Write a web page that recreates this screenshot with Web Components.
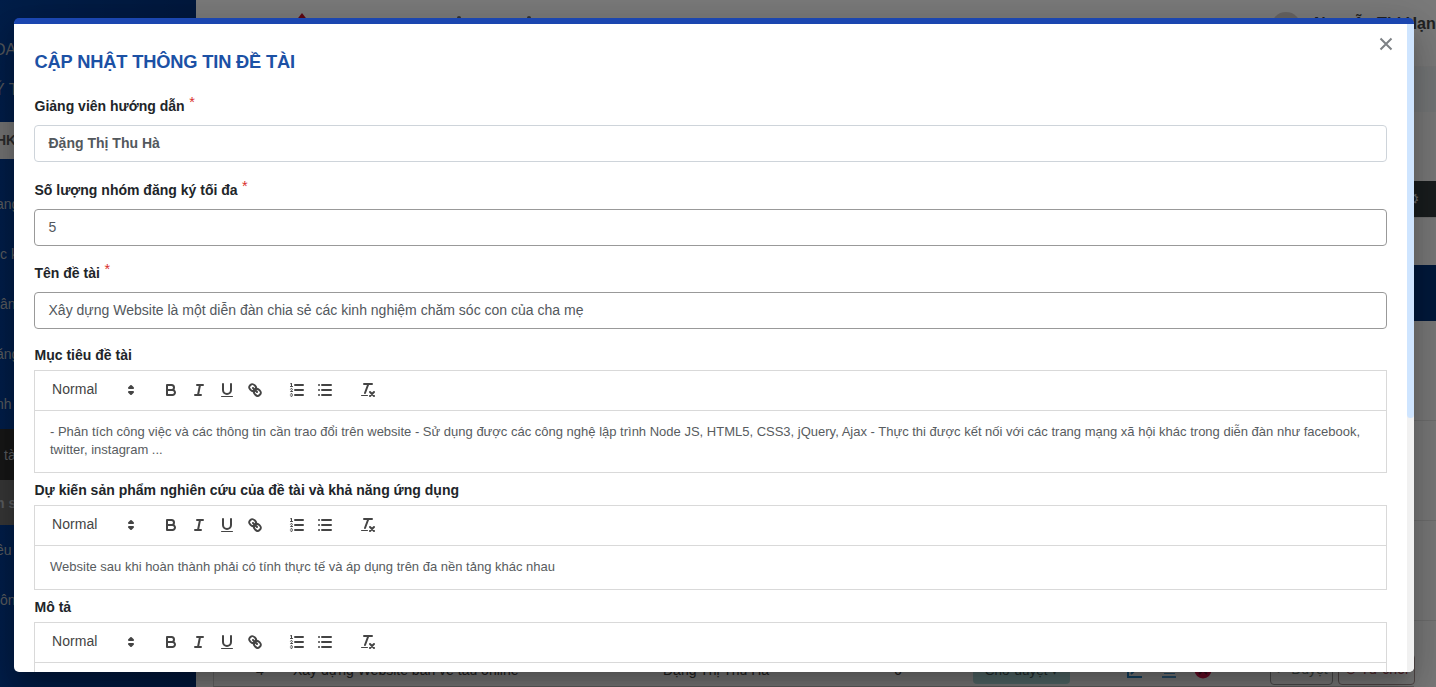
<!DOCTYPE html>
<html lang="vi">
<head>
<meta charset="utf-8">
<title>Cập nhật thông tin đề tài</title>
<style>
html,body{margin:0;height:100%;overflow:hidden;font-family:"Liberation Sans",Arial,sans-serif}
</style>
</head>
<body>
<topic-app></topic-app>
<script>
function define(name, html, setup) {
  const tpl = document.createElement('template');
  tpl.innerHTML = html;
  customElements.define(name, class extends HTMLElement {
    constructor() {
      super();
      this.attachShadow({mode: 'open'}).append(tpl.content.cloneNode(true));
    }
    connectedCallback() { if (setup) setup(this, this.shadowRoot); }
  });
}

define('side-item', `<style>
:host{display:flex;align-items:center;height:50px;font-size:14px;color:#b4b8be;white-space:nowrap;overflow:hidden;box-sizing:border-box}
:host([dark]){background:#2e2e2e;height:51px;padding-left:4px}
:host([grey]){background:#6e6e6e;height:45px;font-weight:700}
:host([cut]) slot{display:block;margin-left:-4px}
</style><slot></slot>`);

define('side-bar', `<style>
:host{display:block;width:196px;height:100%;background:linear-gradient(90deg,#003c92,#00307a);overflow:hidden;color:#a9adb5;flex:none}
.h{height:40px;line-height:40px;font-size:16px;margin-left:-6px;white-space:nowrap}
.h.first{margin-top:30px}
.pick{margin:12px 10px 20px 0;height:37px;background:#e6e6e6;border-radius:0 4px 4px 0;color:#555;font:700 14px/37px "Liberation Sans",sans-serif;text-indent:-4px}
</style>
<div class="h first">DA</div><div class="h">Ý T</div>
<div class="pick">HK</div>
<side-item cut>ang</side-item><side-item>c k</side-item><side-item>ân</side-item><side-item cut>ăng</side-item><side-item cut>nh</side-item>
<side-item dark>tà</side-item><side-item grey cut>n s</side-item><side-item cut>êu</side-item><side-item>ôn</side-item>`);

define('page-header', `<style>
:host{display:flex;height:67px;box-sizing:border-box;justify-content:space-between;background:#f4f4f4;color:#444;font-weight:700;border-bottom:1px solid #ececec}
.logo{margin:13px 0 0 98px;display:flex;gap:147px}
.user{display:flex;gap:13px;padding-top:12px;font-size:16px}
.avatar{width:30px;height:30px;border-radius:50%;background:#cfc8c6}
.name{white-space:nowrap;line-height:24px;width:122px}
.marks{display:flex;gap:66px;padding-top:3px}
.marks i{width:4px;height:3px;border-radius:50%;background:#666}
</style>
<div class="logo"><svg width="16" height="14" viewBox="0 0 16 14"><path d="M8 0l7 9H1z" fill="#c01028"/></svg><div class="marks"><i></i><i></i></div></div>
<div class="user"><div class="avatar"></div><div class="name">Nguyễn Thị Hạn</div></div>`);

define('topic-row', `<style>
:host{display:grid;grid-template-columns:79px 370px 231px 79px 148px 149px 1fr;align-items:center;height:34px;font-size:14px;color:#444;white-space:nowrap;border-left:1px solid #ccc;border-bottom:1px solid #bbb;box-sizing:border-box;margin:0 22px 0 17px}
.n{padding-left:42px}
.tag{background:#a9d5d4;color:#47605f;border-radius:4px;width:97px;height:26px;line-height:26px;text-align:center;font-size:13.500px;margin-top:3px}
.ic{display:flex;gap:17px;align-items:center;padding-left:5px}
.btns{display:flex;gap:5px}.btns span{border:1px solid #999;border-radius:4px;box-sizing:border-box;width:63px;height:31px;line-height:29px;text-align:center;font-size:14px;color:#6d7d77}.btns span+span{width:77px;color:#a34450;border-color:#a59090}
</style>
<span class="n">4</span><span>Xây dựng Website bán vé tàu online</span><span>Đặng Thị Thu Hà</span><span>6</span><span class="tag">Chờ duyệt ▾</span>
<span class="ic"><svg width="18" height="18" viewBox="0 0 18 18" fill="none" stroke="#2484c6" stroke-width="2"><path d="M2 3v13h14M5 13l9-9"/></svg><svg width="16" height="18" viewBox="0 0 16 18" fill="#4e9bd0"><path d="M2 2h12v6H2zM3 9h11v1H3zM3 12h11v1H3zM1 15h14v2H1z"/></svg><svg width="18" height="18" viewBox="0 0 18 18"><circle cx="9" cy="9" r="8.500" fill="#d5194f"/><path d="M5 5l8 8M13 5l-8 8" stroke="#681437" stroke-width="2"/></svg></span>
<span class="btns"><span>✓ Duyệt</span><span>⊗ Từ chối</span></span>`);

define('main-page', `<style>
:host{display:flex;flex-direction:column;flex:1;min-width:0;background:#f2f2f2}
.crumb{height:45px;background:#e9edef;margin-bottom:69px}
.tool{align-self:flex-end;width:140px;height:36px;background:#333a3d;color:#ccc;text-align:right;padding-right:17px;box-sizing:border-box;border-radius:4px 0 0 4px;line-height:36px;font-size:15px}
.filters{height:48px;border-top:1px solid #ddd;box-sizing:border-box}
.thead{margin-left:17px;height:56px;background:#003278}
.rows{flex:1;background:repeating-linear-gradient(#0000 0 99px,#ddd 99px 100px);margin:0 0 0 17px}
</style>
<page-header></page-header><div class="crumb"></div><div class="tool">⚙</div><div class="filters"></div><div class="thead"></div><div class="rows"></div><topic-row></topic-row>`);

const ICONS = {
  bold: '<path d="M5,4H9.5A2.5,2.5,0,0,1,12,6.5v0A2.5,2.5,0,0,1,9.5,9H5V4Z"/><path d="M5,9h5.5A2.5,2.5,0,0,1,13,11.5v0A2.5,2.5,0,0,1,10.5,14H5V9Z"/>',
  italic: '<path d="M7 4h6M5 14h6M8 14L10 4"/>',
  underline: '<path d="M5,3V9a4.012,4.012,0,0,0,4,4H9a4.012,4.012,0,0,0,4-4V3"/><rect class="f" x="3" y="15" width="12" height="1" rx=".5"/>',
  link: '<path d="M7 7l4 4M8.9,4.577a3.476,3.476,0,0,1,.36,4.679A3.476,3.476,0,0,1,4.577,8.9C3.185,7.5,2.035,6.4,4.217,4.217S7.5,3.185,8.9,4.577Z"/><path d="M13.423,9.1a3.476,3.476,0,0,0-4.679-.36,3.476,3.476,0,0,0,.36,4.679c1.392,1.392,2.5,2.542,4.679.36S14.815,10.5,13.423,9.1Z"/>',
  ordered: '<path d="M7 4h8M7 9h8M7 14h8"/><path class="t" d="M2.5 5.5h2"/><path class="f" d="M3.5,6A0.5,0.5,0,0,1,3,5.5V3.085l-0.276.138A0.5,0.5,0,0,1,2.053,3c-0.124-.247-0.023-0.324.224-0.447l1-.5A0.5,0.5,0,0,1,4,2.5v3A0.5,0.5,0,0,1,3.5,6Z"/><path class="t" d="M4.5,10.5h-2c0-.234,1.85-1.076,1.85-2.234A0.959,0.959,0,0,0,2.5,8.156"/><path class="t" d="M2.5,14.846a0.959,0.959,0,0,0,1.85-.109A0.7,0.7,0,0,0,3.75,14a0.688,0.688,0,0,0,.6-0.736,0.959,0.959,0,0,0-1.85-.109"/>',
  bullet: '<path d="M6 4h9M6 9h9M6 14h9M3 4h.01M3 9h.01M3 14h.01"/>',
  clean: '<path d="M5 3h8M6 12L9.35 3M11 11l4 4M15 11l-4 4"/><rect class="f" x="2" y="14" width="7" height="1" rx=".5"/>',
  updown: '<path d="M7 11l2 2 2-2zM7 7l2-2 2 2z"/>'
};
define('tool-icon', `<style>
:host{display:flex;width:28px;height:24px;padding:3px 5px;box-sizing:border-box}
:host([name=updown]){width:18px;padding:3px 0}
svg{width:18px;height:18px;fill:none;stroke:#444;stroke-width:2;stroke-linecap:round;stroke-linejoin:round}
.f{fill:#444;stroke:none}.t{stroke-width:1}
</style><svg viewBox="0 0 18 18"></svg>`, (el, r) => { r.querySelector('svg').innerHTML = ICONS[el.getAttribute('name')]; });

define('rich-editor', `<style>
:host{display:block;border:1px solid #d9d9d9;box-sizing:border-box}
.bar{display:flex;height:40px;box-sizing:border-box;padding:7px 8px;border-bottom:1px solid #d9d9d9}
.pick{display:flex;justify-content:space-between;width:98.500px;padding:0 1.500px 0 9px;box-sizing:border-box;font-size:14px;line-height:23px;color:#444;margin-right:15px;letter-spacing:.05px}
.g{display:flex;margin-right:14.500px}
.body{padding:12px 15px 13px;font-size:13px;line-height:18px;color:#585c60;min-height:18px}
</style>
<div class="bar"><span class="pick">Normal<tool-icon name="updown"></tool-icon></span>
<span class="g"><tool-icon name="bold"></tool-icon><tool-icon name="italic"></tool-icon><tool-icon name="underline"></tool-icon><tool-icon name="link"></tool-icon></span>
<span class="g"><tool-icon name="ordered"></tool-icon><tool-icon name="bullet"></tool-icon></span>
<tool-icon name="clean"></tool-icon></div>
<div class="body"><slot></slot></div>`);

define('field-label', `<style>
:host{display:flex;height:20px;align-items:center;font-size:14.030px;font-weight:700;color:#212529;white-space:nowrap;padding-left:.5px}
i{display:none;font:400 14.500px/10px "Liberation Sans",sans-serif;color:#d9302c;margin:-8px 0 0 4.500px}
:host([required]) i{display:block}
</style><slot></slot><i>*</i>`);

define('text-field', `<style>
:host{display:flex;align-items:center;height:37px;box-sizing:border-box;border:1px solid #999;border-radius:4px;padding:0 13.500px 1px;font-size:14.020px;color:#53585d;white-space:nowrap}
:host([fixed]){border-color:#ced4da;font-weight:700}
</style><slot></slot>`);

define('modal-dialog', `<style>
:host{position:absolute;left:14px;top:18px;width:1400px;height:654px;box-sizing:border-box;border-top:6px solid #1b46b0;border-radius:5px;background:#fff;display:flex;overflow:hidden;box-shadow:0 11px 15px -7px rgba(0,0,0,.2),0 24px 38px 3px rgba(0,0,0,.14),0 9px 46px 8px rgba(0,0,0,.12)}
.content{flex:1;min-width:0;padding:26px 20px 0;overflow:hidden}
.track{width:7px;flex:none;background:#f1f1f1}
.thumb{height:394px;background:#cfe5ff;border-radius:0 0 4px 4px}
.close{position:absolute;left:1365px;top:13px}
</style>
<div class="content"><slot></slot></div><div class="track"><div class="thumb"></div></div>
<svg class="close" width="14" height="14" viewBox="0 0 14 14"><path d="M1.500 1.500l11 11M12.500 1.500l-11 11" stroke="#7d8185" stroke-width="2"/></svg>`);

define('topic-form', `<style>
:host{display:block}
h2{margin:0 0 21px;padding:0 0 1px .5px;height:24px;line-height:24px;font-size:18.300px;letter-spacing:-.17px;font-weight:700;color:#1c51a5;white-space:nowrap}
field-label{margin-bottom:9px}
text-field{margin-bottom:17.500px}
.e{margin-bottom:5px}
.last-field{margin-bottom:16px}
rich-editor{margin-bottom:7px}
</style>
<h2>CẬP NHẬT THÔNG TIN ĐỀ TÀI</h2>
<field-label required>Giảng viên hướng dẫn</field-label><text-field fixed>Đặng Thị Thu Hà</text-field>
<field-label required>Số lượng nhóm đăng ký tối đa</field-label><text-field>5</text-field>
<field-label required>Tên đề tài</field-label><text-field class="last-field">Xây dựng Website là một diễn đàn chia sẻ các kinh nghiệm chăm sóc con của cha mẹ</text-field>
<field-label class="e">Mục tiêu đề tài</field-label><rich-editor>- Phân tích công việc và các thông tin cần trao đổi trên website - Sử dụng được các công nghệ lập trình Node JS, HTML5, CSS3, jQuery, Ajax - Thực thi được kết nối với các trang mạng xã hội khác trong diễn đàn như facebook, twitter, instagram ...</rich-editor>
<field-label class="e">Dự kiến sản phẩm nghiên cứu của đề tài và khả năng ứng dụng</field-label><rich-editor>Website sau khi hoàn thành phải có tính thực tế và áp dụng trên đa nền tảng khác nhau</rich-editor>
<field-label class="e">Mô tả</field-label><rich-editor></rich-editor>`);

define('topic-app', `<style>
:host{display:block;position:relative;width:1436px;height:687px;overflow:hidden}
.page{display:flex;height:100%}
.shade{position:absolute;inset:0;background:rgba(0,0,0,.5)}
</style>
<div class="page"><side-bar></side-bar><main-page></main-page></div><div class="shade"></div>
<modal-dialog><topic-form></topic-form></modal-dialog>`);
</script>
</body>
</html>
